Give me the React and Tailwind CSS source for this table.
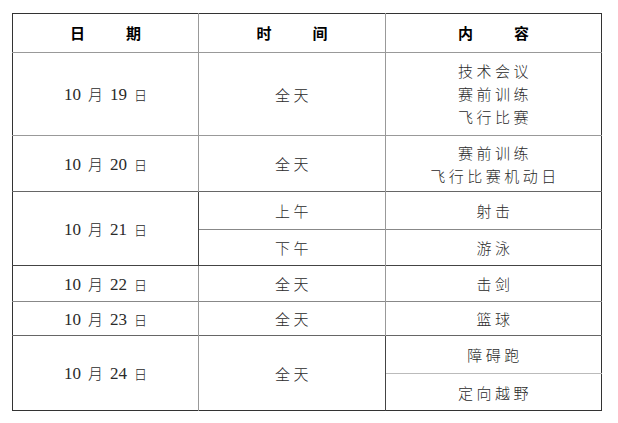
const serif = { fontFamily: '"Liberation Serif", "Times New Roman", serif' };

const Date = ({ d }) => (
  <span className="text-[17px] text-[#2a2a2a]">
    <span style={serif}>10</span>
    <span className="mx-[7px] text-[15px] font-light">月</span>
    <span style={serif}>{d}</span>
    <span className="ml-[7px] text-[13px] font-light">日</span>
  </span>
);

const Cn = ({ children }) => (
  <div className="text-[15px] leading-[23px] tracking-[3.5px] font-light text-[#2a2a2a] pl-[3px]">
    {children}
  </div>
);

export default function App() {
  return (
    <div
      className="w-[618px] h-[423px] bg-white pt-[13px] pl-[12px]"
      style={{ fontFamily: '"Noto Sans CJK SC", sans-serif' }}
    >
      <table className="table-fixed border-collapse w-[589px] border border-[#333] text-center">
        <colgroup>
          <col className="w-[186px]" />
          <col className="w-[187px]" />
          <col className="w-[216px]" />
        </colgroup>
        <tbody>
          <tr className="h-[39px] border-b border-[#999] text-[15px] font-bold text-black">
            <td className="border-r border-[#999]">
              日<span className="inline-block w-[41px]" />期
            </td>
            <td className="border-r border-[#999]">
              时<span className="inline-block w-[41px]" />间
            </td>
            <td>
              内<span className="inline-block w-[41px]" />容
            </td>
          </tr>
          <tr className="h-[83px] border-b border-[#999]">
            <td className="border-r border-[#999]"><Date d="19" /></td>
            <td className="border-r border-[#999]"><Cn>全天</Cn></td>
            <td className="pb-[1px]">
              <Cn>技术会议</Cn>
              <Cn>赛前训练</Cn>
              <Cn>飞行比赛</Cn>
            </td>
          </tr>
          <tr className="h-[56px] border-b border-[#666]">
            <td className="border-r border-[#999]"><Date d="20" /></td>
            <td className="border-r border-[#999]"><Cn>全天</Cn></td>
            <td>
              <Cn>赛前训练</Cn>
              <Cn>飞行比赛机动日</Cn>
            </td>
          </tr>
          <tr className="h-[38px] border-b border-[#888]">
            <td rowSpan={2} className="border-r border-[#444] border-b border-b-[#444]"><Date d="21" /></td>
            <td className="border-r border-[#999]"><Cn>上午</Cn></td>
            <td><Cn>射击</Cn></td>
          </tr>
          <tr className="h-[36px] border-b border-[#444]">
            <td className="border-r border-[#999]"><Cn>下午</Cn></td>
            <td><Cn>游泳</Cn></td>
          </tr>
          <tr className="h-[36px] border-b border-[#888]">
            <td className="border-r border-[#999]"><Date d="22" /></td>
            <td className="border-r border-[#999]"><Cn>全天</Cn></td>
            <td><Cn>击剑</Cn></td>
          </tr>
          <tr className="h-[34px] border-b border-[#666]">
            <td className="border-r border-[#999]"><Date d="23" /></td>
            <td className="border-r border-[#999]"><Cn>全天</Cn></td>
            <td><Cn>篮球</Cn></td>
          </tr>
          <tr className="h-[38px] border-b border-[#bbb]">
            <td rowSpan={2} className="border-r border-[#999]"><Date d="24" /></td>
            <td rowSpan={2} className="border-r border-[#444]"><Cn>全天</Cn></td>
            <td><Cn>障碍跑</Cn></td>
          </tr>
          <tr className="h-[37px]">
            <td><Cn>定向越野</Cn></td>
          </tr>
        </tbody>
      </table>
    </div>
  );
}
